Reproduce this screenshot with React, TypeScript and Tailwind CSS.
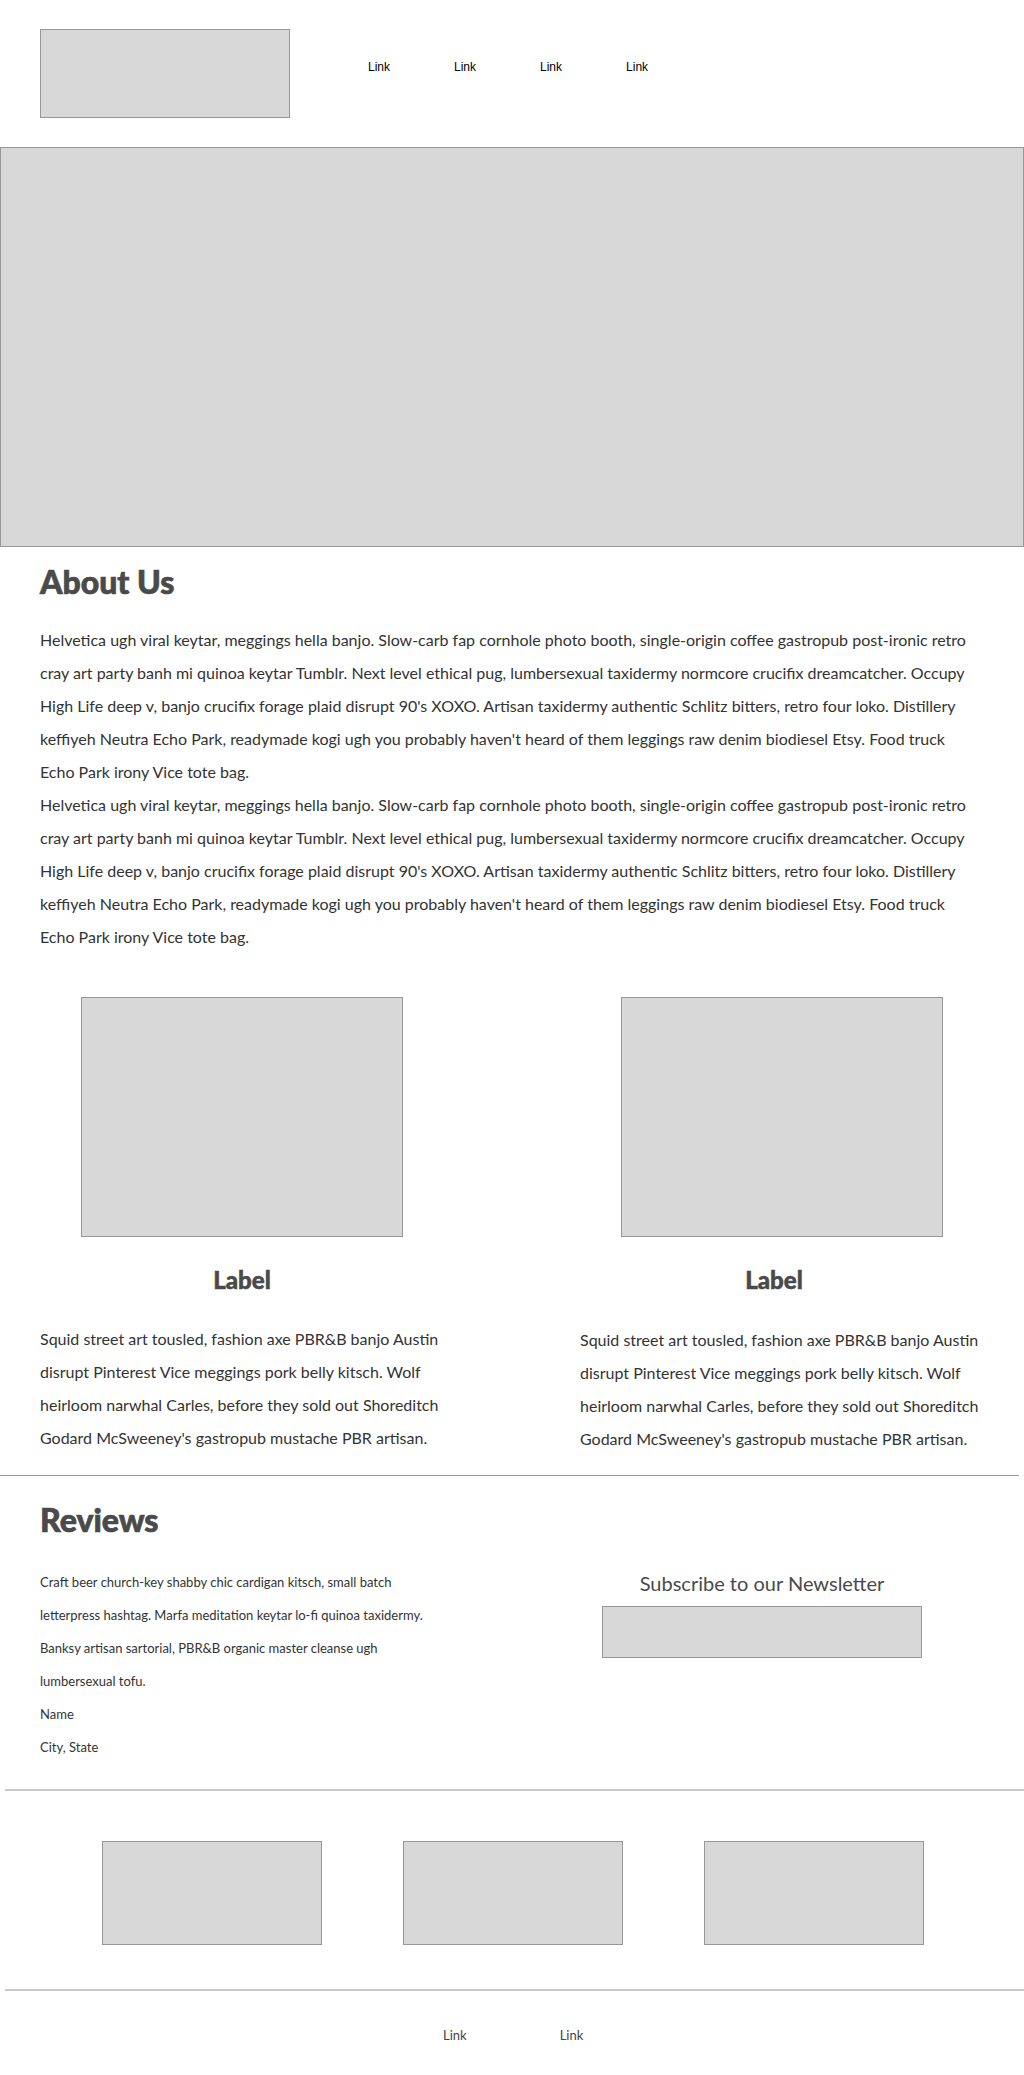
import React from "react";

const para =
  "Helvetica ugh viral keytar, meggings hella banjo. Slow-carb fap cornhole photo booth, single-origin coffee gastropub post-ironic retro cray art party banh mi quinoa keytar Tumblr. Next level ethical pug, lumbersexual taxidermy normcore crucifix dreamcatcher. Occupy High Life deep v, banjo crucifix forage plaid disrupt 90's XOXO. Artisan taxidermy authentic Schlitz bitters, retro four loko. Distillery keffiyeh Neutra Echo Park, readymade kogi ugh you probably haven't heard of them leggings raw denim biodiesel Etsy. Food truck Echo Park irony Vice tote bag.";

const colText =
  "Squid street art tousled, fashion axe PBR&B banjo Austin disrupt Pinterest Vice meggings pork belly kitsch. Wolf heirloom narwhal Carles, before they sold out Shoreditch Godard McSweeney's gastropub mustache PBR artisan.";

const Box = ({ className }: { className: string }) => (
  <div className={"bg-[#d8d8d8] border border-[#979797] " + className} />
);

export default function App() {
  return (
    <div className="w-[1024px] h-[2075px] bg-white font-['Lato','Noto_Sans',sans-serif] text-[#333333] overflow-hidden">
      {/* Header */}
      <header className="flex items-start pt-[29px] pl-10 h-[147px]">
        <Box className="w-[250px] h-[89px]" />
        <nav className="flex gap-[64px] ml-[78px] mt-[31px] font-['Liberation_Sans',Arial,sans-serif] text-[12px] leading-[14px] text-black">
          <a>Link</a>
          <a>Link</a>
          <a>Link</a>
          <a>Link</a>
        </nav>
      </header>

      {/* Hero */}
      <Box className="w-[1024px] h-[400px]" />

      {/* About */}
      <section className="px-10 pt-[16px]">
        <h1 className="text-[32px] leading-[38px] font-black text-[#4a4a4a] [-webkit-text-stroke:0.7px_#4a4a4a]">About Us</h1>
        <div className="mt-[22px] text-[16px] leading-[33px] w-[935px]">
          <p>{para}</p>
          <p>{para}</p>
        </div>
      </section>

      {/* Two columns */}
      <section className="flex justify-between px-10 mt-[44px]">
        <div className="w-[404px] flex flex-col">
          <Box className="w-[322px] h-[240px] mx-auto" />
          <h2 className="mt-[28px] text-center text-[24px] leading-[29px] font-black text-[#4a4a4a] [-webkit-text-stroke:0.5px_#4a4a4a]">Label</h2>
          <p className="mt-[28px] text-[16px] leading-[33px]">{colText}</p>
        </div>
        <div className="w-[404px] flex flex-col">
          <Box className="w-[322px] h-[240px] mx-auto" />
          <h2 className="mt-[28px] text-center pr-[16px] text-[24px] leading-[29px] font-black text-[#4a4a4a] [-webkit-text-stroke:0.5px_#4a4a4a]">Label</h2>
          <p className="mt-[29px] text-[16px] leading-[33px]">{colText}</p>
        </div>
      </section>

      <div className="mt-[20px] w-[1019px] h-px bg-[#979797]" />

      {/* Reviews */}
      <section className="px-10 pt-[25px]">
        <h1 className="text-[32px] leading-[38px] font-black text-[#4a4a4a] [-webkit-text-stroke:0.7px_#4a4a4a]">Reviews</h1>
        <div className="flex justify-between mt-[27px]">
          <div className="w-[404px] text-[13px] leading-[33px]">
            <p>
              Craft beer church-key shabby chic cardigan kitsch, small batch letterpress hashtag. Marfa meditation keytar lo-fi quinoa taxidermy. Banksy artisan sartorial, PBR&amp;B organic master cleanse ugh lumbersexual tofu.
            </p>
            <p>Name</p>
            <p>City, State</p>
          </div>
          <div className="w-[404px]">
            <div className="w-[320px] ml-[22px] mt-[5px] flex flex-col">
              <p className="text-center text-[20px] leading-[24px] text-[#4a4a4a]">Subscribe to our Newsletter</p>
              <Box className="mt-[11px] w-[320px] h-[52px]" />
            </div>
          </div>
        </div>
      </section>

      <div className="mt-[25px] ml-[5px] w-[1019px] h-[2px] bg-[#c8c8c8]" />

      {/* Logos */}
      <section className="flex justify-center gap-[81px] pt-[50px] pb-[44px] pl-px">
        <Box className="w-[220px] h-[104px]" />
        <Box className="w-[220px] h-[104px]" />
        <Box className="w-[220px] h-[104px]" />
      </section>

      <div className="ml-[5px] w-[1019px] h-[2px] bg-[#c8c8c8]" />

      {/* Footer */}
      <footer className="flex pl-[443px] gap-[93px] pt-[36px] text-[13px] leading-[16px] text-[#444444]">
        <a>Link</a>
        <a>Link</a>
      </footer>
    </div>
  );
}
